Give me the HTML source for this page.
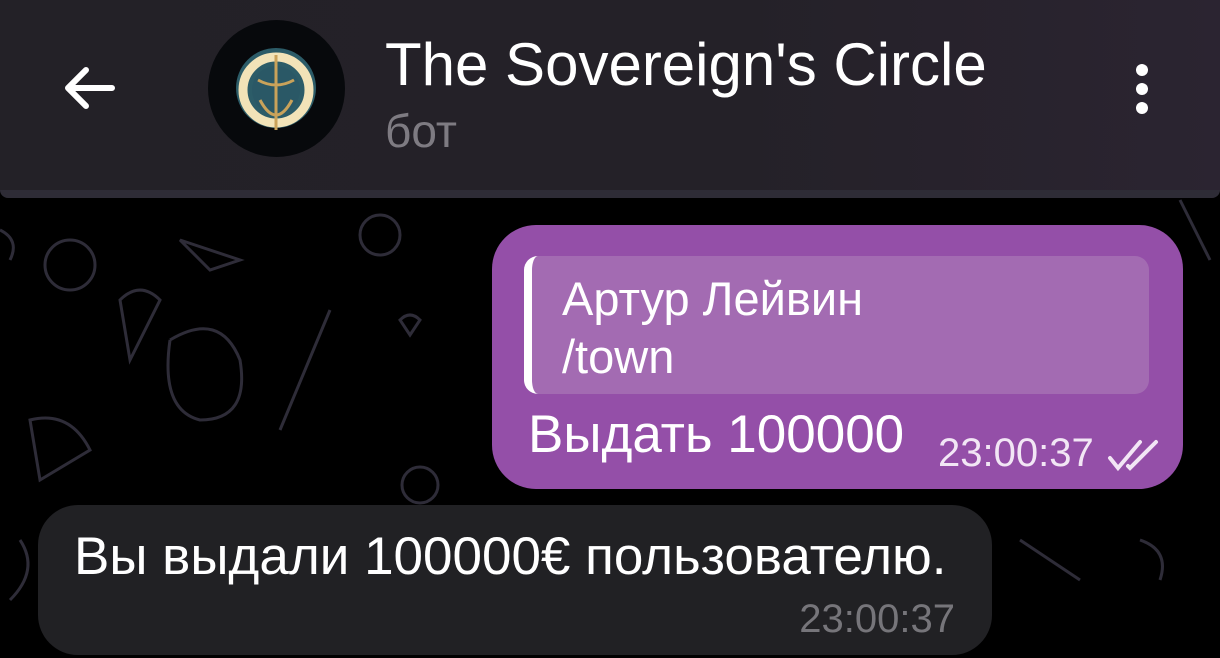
<!DOCTYPE html>
<html><head><meta charset="utf-8"><style>
body{margin:0;width:1220px;height:658px;overflow:hidden;background:#000;font-family:"Liberation Sans","DejaVu Sans",sans-serif;position:relative}
.hdr{position:absolute;left:0;top:0;width:1220px;height:190px;background:linear-gradient(90deg,#232127 0%,#242128 60%,#2b2431 100%)}
.shade{position:absolute;left:0;top:190px;width:1220px;height:8px;background:#2e2c36;border-radius:0 0 30px 30px}
.av{position:absolute;left:208px;top:20px;width:137px;height:137px;border-radius:50%;background:#07090c}
.t{position:absolute;left:385px;top:30px;color:#fff;font-size:60px;line-height:70px;white-space:nowrap}
.s{position:absolute;left:385px;top:104px;color:#7e7b82;font-size:46px;line-height:54px}
.out{position:absolute;left:492px;top:225px;width:691px;height:264px;background:#944fa8;border-radius:44px}
.q{position:absolute;left:524px;top:256px;width:625px;height:138px;background:#a36bb2;border-radius:14px;border-left:8px solid #fff;box-sizing:border-box}
.q div{position:absolute;left:30px;color:#fff;font-size:47px;line-height:54px;white-space:nowrap}
.m{position:absolute;color:#fff;font-size:53px;line-height:62px;white-space:nowrap}
.in{position:absolute;left:38px;top:505px;width:954px;height:150px;background:#212124;border-radius:40px}
</style></head><body>
<svg width="1220" height="658" style="position:absolute;left:0;top:0" fill="none" stroke="#2e2c38" stroke-width="3">
<circle cx="70" cy="265" r="25"/><path d="M180 240l60 20-30 10z"/><circle cx="380" cy="235" r="20"/><path d="M120 300q20-20 40 0l-30 60z"/><path d="M170 340q50-30 70 20q10 60-40 60q-40-10-30-80"/><path d="M330 310l-50 120"/><path d="M30 420q40-10 60 30l-50 30z"/><path d="M400 320q10-10 20 0l-10 15z"/><circle cx="420" cy="485" r="18"/><path d="M0 230q20 10 10 30"/><path d="M1020 540l60 40"/><path d="M1140 540q30 10 20 40"/><path d="M1180 200l30 60"/><path d="M20 540q20 30-10 60"/>
</svg>
<div class="hdr"></div><div class="shade"></div>
<svg style="position:absolute;left:60px;top:62px" width="60" height="52"><path d="M8 26H52M8 26L26 8M8 26L26 44" stroke="#fff" stroke-width="6" stroke-linecap="round" fill="none"/></svg>
<div class="av"><svg width="137" height="137"><circle cx="68" cy="68" r="40" fill="#2c5c68"/><circle cx="68" cy="70" r="33" fill="none" stroke="#f2e3b8" stroke-width="9"/><circle cx="68" cy="70" r="24" fill="#2a5866"/><path d="M68 35V110M50 60q18 10 36 0M52 80q16 30 32 0" stroke="#c9a25a" stroke-width="3" fill="none"/></svg></div>
<div class="t">The Sovereign's Circle</div>
<div class="s">бот</div>
<svg style="position:absolute;left:1130px;top:62px" width="24" height="56"><circle cx="12" cy="8" r="6" fill="#fff"/><circle cx="12" cy="27" r="6" fill="#fff"/><circle cx="12" cy="46" r="6" fill="#fff"/></svg>
<div class="out"></div>
<div class="q"><div style="top:16px">Артур Лейвин</div><div style="top:74px">/town</div></div>
<div class="m" style="left:528px;top:404px">Выдать 100000</div>
<div style="position:absolute;left:938px;top:430px;color:#f2e6f5;font-size:40px;line-height:46px">23:00:37</div>
<svg style="position:absolute;left:1106px;top:438px" width="56" height="34" fill="none" stroke="#f2e6f5" stroke-width="4" stroke-linecap="round"><path d="M4 20l8 10L34 4M22 28l2 2L50 4"/></svg>
<div class="in"></div>
<div class="m" style="left:74px;top:526px">Вы выдали 100000€ пользователю.</div>
<div style="position:absolute;right:265px;top:596px;color:#76757a;font-size:40px;line-height:46px">23:00:37</div>
</body></html>
